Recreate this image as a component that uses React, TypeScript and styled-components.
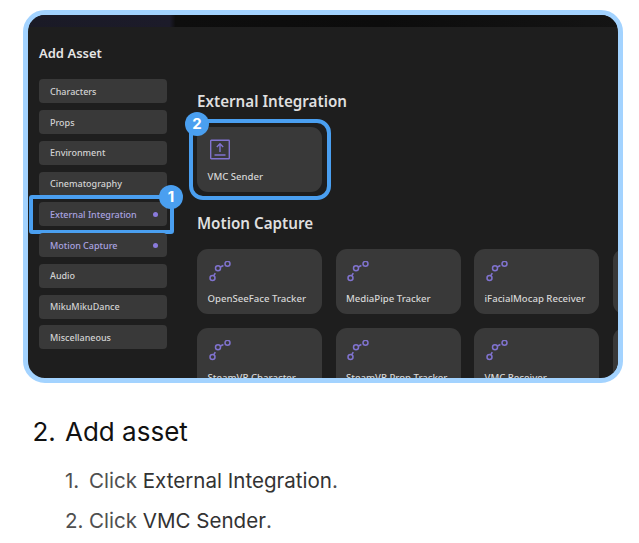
import React from "react";
import styled, { createGlobalStyle } from "styled-components";

const GlobalStyle = createGlobalStyle`
  html, body {
    margin: 0;
    padding: 0;
    background: #fff;
  }
  body {
    font-family: Inter, "Noto Sans", sans-serif;
    overflow: hidden;
  }
`;

const Page = styled.div`
  width: 639px;
  height: 543px;
  overflow: hidden;
  padding: 10px 16px 0 23px;
  box-sizing: border-box;
`;

const Frame = styled.div`
  width: 600px;
  height: 373px;
  box-sizing: border-box;
  border: 5px solid #a3d3ff;
  border-radius: 22px;
  background: #1e1e1e;
  overflow: hidden;
  display: flex;
  flex-direction: column;
  font-family: "Noto Sans", sans-serif;
`;

const TopStrip = styled.div`
  height: 12px;
  flex: none;
  background: linear-gradient(90deg, #1a1a26 0, #1c1b2a 24%, #0e0e0e 25%, #0c0c0c 60%, #141414 100%);
`;

const Panel = styled.div`
  flex: 1;
  min-height: 0;
  display: flex;
  padding-left: 11px;
`;

const Sidebar = styled.aside`
  width: 128px;
  flex: none;
  padding-top: 16px;
`;

const PanelTitle = styled.h2`
  margin: 0 0 16.4px;
  height: 20px;
  line-height: 20px;
  font-size: 13px;
  font-weight: 600;
  color: #e6e6e6;
`;

const SideList = styled.div`
  display: flex;
  flex-direction: column;
  gap: 6.75px;
`;

const SideItem = styled.div<{ $active?: boolean }>`
  position: relative;
  height: 24px;
  flex: none;
  box-sizing: border-box;
  display: flex;
  align-items: center;
  justify-content: space-between;
  padding: 0 9px 0 11px;
  border-radius: 4px;
  background: #393939;
  font-size: 9px;
  font-weight: 500;
  color: ${(p) => (p.$active ? "#aaa3e0" : "#d2d2d2")};
`;

const Dot = styled.span`
  width: 5px;
  height: 5px;
  border-radius: 50%;
  background: #8a7bdc;
`;

const Main = styled.main`
  flex: 1;
  min-width: 0;
  padding: 63px 0 0 30px;
  overflow: hidden;
`;

const SectionTitle = styled.h3`
  margin: 0 0 15px;
  height: 22px;
  line-height: 22px;
  font-size: 15.2px;
  font-weight: 600;
  color: #dfdfdf;
  white-space: nowrap;
`;

const MotionTitle = styled(SectionTitle)`
  margin: 20px 0 14.6px;
`;

const CardGrid = styled.div`
  display: grid;
  grid-template-columns: repeat(4, 125px);
  grid-auto-rows: 65px;
  column-gap: 13.5px;
  row-gap: 14px;
`;

const Card = styled.div`
  position: relative;
  width: 125px;
  height: 65px;
  box-sizing: border-box;
  padding: 12px 10px 0 10.5px;
  border-radius: 11px;
  background: #393939;
  font-size: 9.6px;
  font-weight: 500;
  line-height: 15px;
  color: #d6d6d6;
  white-space: nowrap;
`;

const CardIcon = styled.svg`
  display: block;
  width: 24px;
  height: 24px;
  margin-bottom: 6px;
  color: #8073cf;
`;

const Highlight = styled.div<{ $radius: number; $inset: string }>`
  position: absolute;
  inset: ${(p) => p.$inset};
  border: 4px solid #4a9ff0;
  border-radius: ${(p) => p.$radius}px;
  pointer-events: none;
`;

const Badge = styled.span<{ $top: number; $left?: number; $right?: number }>`
  position: absolute;
  top: ${(p) => p.$top}px;
  ${(p) => (p.$left !== undefined ? `left: ${p.$left}px;` : "")}
  ${(p) => (p.$right !== undefined ? `right: ${p.$right}px;` : "")}
  width: 24px;
  height: 24px;
  border-radius: 50%;
  background: #4a9ff0;
  color: #fff;
  font-family: Inter, sans-serif;
  font-size: 15px;
  font-weight: 700;
  line-height: 24px;
  text-align: center;
`;

const Steps = styled.div`
  margin: 31px 0 0;
  padding: 0 0 0 10px;
  color: #111;
  font-family: Inter, sans-serif;
`;

const StepHeading = styled.div`
  display: flex;
  font-size: 26px;
  line-height: 36px;
  margin-left: -0.5px;
`;

const Marker = styled.span<{ $width: number }>`
  flex: none;
  width: ${(p) => p.$width}px;
`;

const SubSteps = styled.div`
  margin: 16px 0 0 32px;
  display: flex;
  flex-direction: column;
  gap: 10px;
`;

const SubStep = styled.div`
  display: flex;
  font-size: 20.55px;
  line-height: 30px;
  color: #4f4f4f;
  white-space: pre;
`;

const Strong = styled.span`
  color: #333;
`;

const UploadIcon = () => (
  <CardIcon viewBox="0 0 24 24" fill="none" stroke="currentColor" strokeWidth="1.4">
    <rect x="2.7" y="1.2" width="18.6" height="18.6" rx="0.6" />
    <path d="M12 13V5M8.8 8L12 4.8 15.2 8M6.5 16h11" />
  </CardIcon>
);

const NodesIcon = () => (
  <CardIcon viewBox="0 0 24 24" fill="none" stroke="currentColor" strokeWidth="1.5">
    <circle cx="4.5" cy="17" r="2.5" />
    <circle cx="10" cy="7.2" r="2.5" />
    <circle cx="19.5" cy="2.8" r="2.5" />
    <path d="M5.9 14.5l1.4-2.4M12.4 6l3-1.5" />
  </CardIcon>
);

const sideItems = [
  "Characters",
  "Props",
  "Environment",
  "Cinematography",
  "External Integration",
  "Motion Capture",
  "Audio",
  "MikuMikuDance",
  "Miscellaneous",
];

const trackers = [
  "OpenSeeFace Tracker",
  "MediaPipe Tracker",
  "iFacialMocap Receiver",
  "",
  "SteamVR Character",
  "SteamVR Prop Tracker",
  "VMC Receiver",
  "",
];

export default function App() {
  return (
    <Page>
      <GlobalStyle />
      <Frame>
        <TopStrip />
        <Panel>
          <Sidebar>
            <PanelTitle>Add Asset</PanelTitle>
            <SideList>
              {sideItems.map((name) => {
                const active = name === "External Integration" || name === "Motion Capture";
                return (
                  <SideItem key={name} $active={active}>
                    {name}
                    {active && <Dot />}
                    {name === "External Integration" && (
                      <>
                        <Highlight $radius={3} $inset="-7.5px -7px -7.5px -10px" />
                        <Badge $top={-17.5} $right={-16}>1</Badge>
                      </>
                    )}
                  </SideItem>
                );
              })}
            </SideList>
          </Sidebar>
          <Main>
            <SectionTitle>External Integration</SectionTitle>
            <Card>
              <UploadIcon />
              VMC Sender
              <Highlight $radius={14} $inset="-8px -9px -8px -8px" />
              <Badge $top={-15} $left={-12}>2</Badge>
            </Card>
            <MotionTitle>Motion Capture</MotionTitle>
            <CardGrid>
              {trackers.map((name, i) => (
                <Card key={i}>
                  {name && <NodesIcon />}
                  {name}
                </Card>
              ))}
            </CardGrid>
          </Main>
        </Panel>
      </Frame>
      <Steps>
        <StepHeading>
          <Marker $width={32.5}>2.</Marker>
          Add asset
        </StepHeading>
        <SubSteps>
          <SubStep>
            <Marker $width={24}>1.</Marker>
            Click <Strong>External Integration</Strong>.
          </SubStep>
          <SubStep>
            <Marker $width={24}>2.</Marker>
            Click <Strong>VMC Sender</Strong>.
          </SubStep>
        </SubSteps>
      </Steps>
    </Page>
  );
}
